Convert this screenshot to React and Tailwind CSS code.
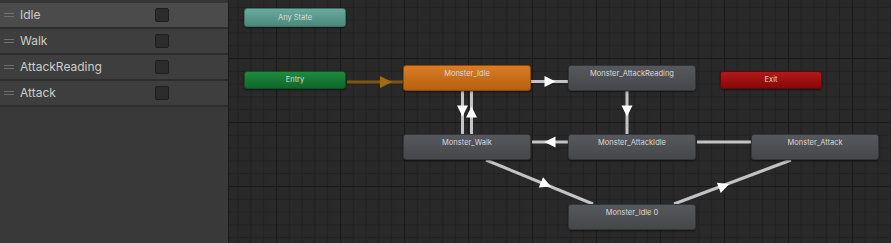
import React from "react";

const params = ["Idle", "Walk", "AttackReading", "Attack"];

// node boxes in page coordinates
const nodes = [
  { label: "Any State", x: 244, y: 8, w: 102, h: 19, kind: "any" },
  { label: "Entry", x: 244, y: 71, w: 102, h: 18, kind: "entry" },
  { label: "Exit", x: 720, y: 71, w: 102, h: 18, kind: "exit" },
  { label: "Monster_Idle", x: 403, y: 65, w: 128, h: 26, kind: "default" },
  { label: "Monster_AttackReading", x: 568, y: 65, w: 128, h: 26, kind: "state" },
  { label: "Monster_Walk", x: 403, y: 134, w: 128, h: 26, kind: "state" },
  { label: "Monster_AttackIdle", x: 568, y: 134, w: 128, h: 26, kind: "state" },
  { label: "Monster_Attack", x: 751, y: 134, w: 128, h: 26, kind: "state" },
  { label: "Monster_Idle 0", x: 568, y: 204, w: 128, h: 26, kind: "state" },
];

const nodeStyle = {
  any: "bg-gradient-to-b from-[#68ab9c] to-[#4b887b] border-[#3d6f65] items-center",
  entry: "bg-gradient-to-b from-[#1f8b3d] to-[#0f672a] border-[#0b5221] items-center",
  exit: "bg-gradient-to-b from-[#b41818] to-[#860909] border-[#650606] items-center",
  default: "bg-gradient-to-b from-[#d97c24] to-[#b6600f] border-[#8f4a0b] pt-[3px]",
  state: "bg-gradient-to-b from-[#56585c] to-[#46474b] border-[#35363a] pt-[3px]",
};

const OX = 228;

// arrowhead triangle centred at (cx,cy) pointing along (dx,dy)
const head = (cx, cy, dx, dy, len = 11, half = 5.5) => {
  const m = Math.hypot(dx, dy);
  const ux = dx / m;
  const uy = dy / m;
  const px = -uy;
  const py = ux;
  const tip = [cx + ux * len / 2, cy + uy * len / 2];
  const b = [cx - ux * len / 2, cy - uy * len / 2];
  const pts = [tip, [b[0] + px * half, b[1] + py * half], [b[0] - px * half, b[1] - py * half]];
  return pts.map((p) => `${p[0] - OX},${p[1]}`).join(" ");
};

const lines = [
  [530, 81.5, 568, 81.5],
  [626, 91, 626, 134],
  [568, 142, 531, 142],
  [696, 142, 751, 142],
  [461.5, 91, 461.5, 134],
  [470.5, 91, 470.5, 134],
  [485, 160, 592, 204],
  [673, 204, 790, 160],
];

const heads = [
  head(549, 81.5, 1, 0),
  head(626, 111, 0, 1),
  head(549, 142, -1, 0),
  head(461.5, 111, 0, 1),
  head(470.5, 112, 0, -1),
  head(545, 184.5, 107, 44),
  head(723, 186, 117, -44),
];

const Graph = () => (
  <div className="relative flex-1 overflow-hidden border-l border-[#1a1a1a] bg-[#292929] [background-image:linear-gradient(#191919_1px,transparent_1px),linear-gradient(90deg,#191919_1px,transparent_1px),linear-gradient(#212121_1px,transparent_1px),linear-gradient(90deg,#212121_1px,transparent_1px)] [background-size:64px_64px,64px_64px,12.8px_12.8px,12.8px_12.8px] [background-position:47px_58px,47px_58px,47px_58px,47px_58px]">
    <svg className="absolute inset-0" width="663" height="243">
      <line x1={346 - OX} y1="82" x2={403 - OX} y2="82" stroke="#80560f" strokeWidth="3" />
      <polygon points={head(385, 82, 1, 0, 12, 6)} fill="#a06c12" />
      {lines.map((l, i) => (
        <line
          key={i}
          x1={l[0] - OX}
          y1={l[1]}
          x2={l[2] - OX}
          y2={l[3]}
          stroke="#c4c4c4"
          strokeWidth="3"
        />
      ))}
      {heads.map((p, i) => (
        <polygon key={i} points={p} fill="#ffffff" />
      ))}
    </svg>

    {nodes.map((n) => (
      <div
        key={n.label}
        className={`absolute flex flex-col rounded-[3px] border shadow-[0_1px_2px_rgba(0,0,0,0.5)] justify-start ${nodeStyle[n.kind]}`}
        style={{ left: n.x - OX - 1, top: n.y, width: n.w, height: n.h }}
      >
        <span
          className={`w-full text-center text-[7.5px] leading-[10px] text-[#dadada] ${
            n.h < 20 ? "my-auto" : ""
          }`}
        >
          {n.label}
        </span>
      </div>
    ))}
  </div>
);

const App = () => {
  return (
    <div className="flex h-[243px] w-[891px] overflow-hidden font-['Inter','Liberation_Sans',sans-serif]">
      <div className="flex w-[228px] shrink-0 flex-col bg-[#393939]">
        <div className="h-[3px] bg-[#363636]" />
        {params.map((p, i) => (
          <div
            key={p}
            className={`flex h-[26px] items-center border-b-2 border-[#2d2d2d] ${
              i === 0 ? "bg-[#4b4b4b]" : "bg-[#3e3e3e]"
            }`}
          >
            <div className="ml-[4px] flex w-[10px] flex-col gap-[2px]">
              <div className="h-px bg-[#707070]" />
              <div className="h-px bg-[#707070]" />
            </div>
            <span className="ml-[6px] w-[135px] text-[12px] text-[#cccccc]">{p}</span>
            <div className="h-[14px] w-[14px] rounded-[2px] border border-[#1e1e1e] bg-[#2c2c2c]" />
          </div>
        ))}
      </div>
      <Graph />
    </div>
  );
};

export default App;
